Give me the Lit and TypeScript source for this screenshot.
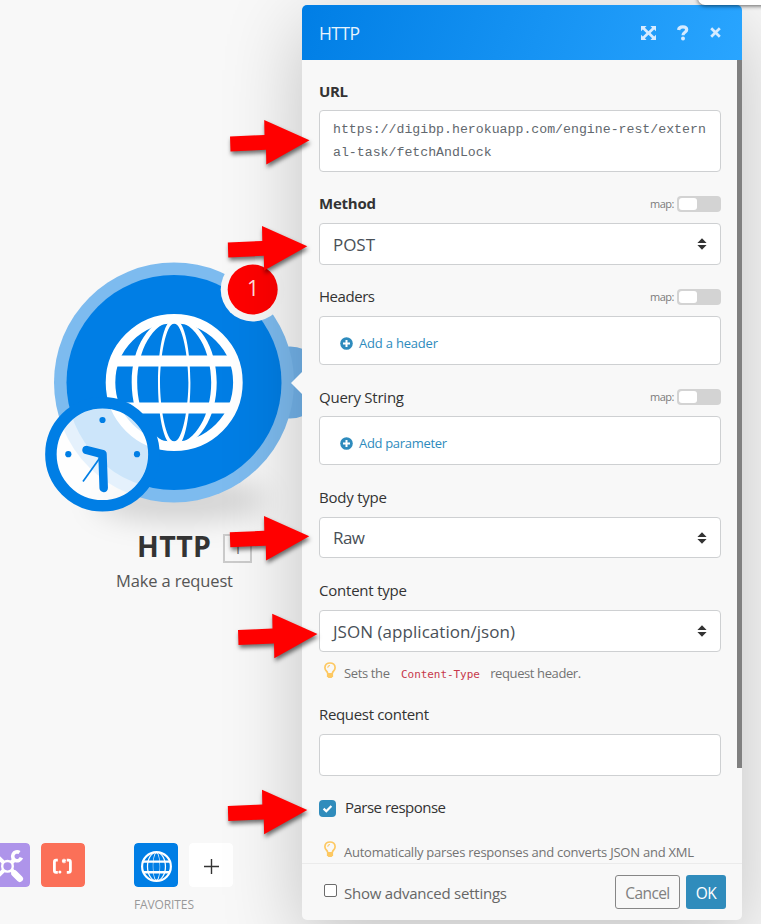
import { LitElement, html, svg, css, nothing } from "lit";
import { customElement, property } from "lit/decorators.js";

/** Inline text run whose tracking is tuned so that it spans `w` pixels. */
@customElement("fit-text")
class FitText extends LitElement {
  @property({ type: Number }) w = 0;
  static styles = css`
    :host { display: inline-block; white-space: nowrap; }
  `;
  firstUpdated() {
    const n = (this.textContent ?? "").trim().length;
    if (!this.w || n < 2) return;
    const natural = this.getBoundingClientRect().width;
    this.style.letterSpacing = `${(this.w - natural) / (n - 1)}px`;
  }
  render() {
    return html`<slot></slot>`;
  }
}

@customElement("map-toggle")
class MapToggle extends LitElement {
  static styles = css`
    :host { display: flex; align-items: center; gap: 3px; height: 16px; font-weight: 400; }
    .text { font-size: 11px; line-height: 16px; color: #7b7b7b; margin-top: -1px; }
    .track { box-sizing: border-box; width: 44px; height: 16px; padding: 2px; border-radius: 4px; background: #d3d3d3; }
    .knob { width: 18px; height: 12px; border-radius: 3px; background: #fff; }
  `;
  render() {
    return html`<span class="text"><fit-text w="24.5">map:</fit-text></span>
      <div class="track"><div class="knob"></div></div>`;
  }
}

@customElement("form-select")
class FormSelect extends LitElement {
  @property() value = "";
  @property({ type: Number }) w = 0;
  static styles = css`
    :host {
      box-sizing: border-box; display: flex; align-items: center; justify-content: space-between;
      padding: 0 13px; border: 1px solid #ced0d2; border-radius: 4px; background: #fff;
      font-size: 17px; line-height: 24px; color: #495057;
    }
    .value { padding-top: 1px; }
    svg { display: block; width: 10px; height: 12px; }
  `;
  render() {
    return html`<span class="value"><fit-text w=${this.w}>${this.value}</fit-text></span>
      <svg viewBox="0 0 10 12"><path d="M5 .3 9.600 5H.4zM5 11.700 .4 7h9.200z" fill="#333" /></svg>`;
  }
}

@customElement("hint-line")
class HintLine extends LitElement {
  static styles = css`
    :host { display: flex; gap: 8px; padding-left: 5px; font-size: 13px; line-height: 20px; color: #737373; }
    svg { flex: none; width: 12px; height: 17px; margin-top: -1px; }
  `;
  render() {
    return html`<svg viewBox="0 0 12 17">
        <path d="M3.600 11.200C3.500 9.400.9 8.600.9 5.700 .9 2.800 3.200 1 6 1s5.100 1.800 5.100 4.700c0 2.900-2.600 3.700-2.700 5.500" fill="none" stroke="#fdc861" stroke-width="1.700" />
        <path d="M3.800 5.700c0-1.300.9-2.200 2.200-2.200" fill="none" stroke="#fdc861" stroke-width="1.100" />
        <path d="M2.900 11h6.200v3.200L7.600 16H4.400l-1.500-1.800z" fill="#fdc861" />
      </svg><div><slot></slot></div>`;
  }
}

const globe = () => svg`
  <g fill="none" stroke="#fff">
    <circle cx="68.500" cy="68.500" r="63.700" stroke-width="9.600" />
    <path fill="#fff" fill-rule="evenodd" stroke="none" d="M68.500 4C44 4 26 33 26 68.500S44 133 68.500 133 111 104 111 68.500 93 4 68.500 4zM68.500 7.500C90 7.500 105.500 37 105.500 68.500S90 129.500 68.500 129.500 31.500 100 31.500 68.500 47 7.500 68.500 7.500z" />
    <path fill="#fff" fill-rule="evenodd" stroke="none" d="M68.500 4C57 6 52.300 40 52.300 68.500S57 131 68.500 133 84.700 97 84.700 68.500 80 6 68.500 4zM68.500 9.500C77 9.500 82.700 44 82.700 68.500S77 127.500 68.500 127.500 54.300 93 54.300 68.500 60 9.500 68.500 9.500z" />
    <path d="M8 47H129M8 94H129" stroke-width="11" />
  </g>`;

@customElement("module-node")
class ModuleNode extends LitElement {
  static styles = css`
    :host { display: block; width: 302px; }
    .art { display: block; width: 302px; height: 300px; overflow: visible; }
    .badge { font-size: 21px; fill: #fff; fill-opacity: .9; text-anchor: middle; }
    .soft { filter: blur(14px); }
    .heading { display: flex; gap: 12px; height: 29px; padding-left: 137px; margin-top: -18px; align-items: center; }
    .name { width: 74px; font-size: 28.500px; font-weight: 700; line-height: 29px; color: #333; }
    .count {
      box-sizing: border-box; width: 29px; height: 29px; border: 2px solid #cbcbcb;
      display: flex; align-items: center; justify-content: center; font-size: 16px; color: #777; margin-top: 3px;
    }
    .sub { padding: 8px 0 0 116px; font-size: 16.500px; line-height: 24px; color: #555; }
  `;
  render() {
    return html`
      <svg class="art" viewBox="0 250 302 300">
        <ellipse class="soft" cx="180" cy="500" rx="86" ry="22" fill="#000" fill-opacity=".15" />
        <circle cx="290" cy="382.500" r="36" fill="#73b3ea" />
        <circle cx="174" cy="382.500" r="120" fill="#7dbbef" />
        <circle cx="174" cy="382.500" r="107.500" fill="#007ee5" />
        <g transform="translate(105.700 314)">${globe()}</g>
        <circle cx="102.400" cy="454.300" r="46.500" fill="#fff" fill-opacity=".8" />
        <circle cx="102.400" cy="454.300" r="51.500" fill="none" stroke="#007ee5" stroke-width="11.500" />
        <g fill="#007ee5">
          <circle cx="102.500" cy="420" r="3.100" />
          <circle cx="68.300" cy="454.200" r="3.100" />
          <circle cx="137" cy="454.200" r="3.100" />
        </g>
        <path d="M86.500 450 102.500 454.200 103.700 488" fill="none" stroke="#007ee5" stroke-width="8.500" stroke-linecap="round" stroke-linejoin="round" />
        <path d="M100.500 457 83 481.500" stroke="#007ee5" stroke-width="1.700" />
        <circle cx="252.700" cy="289.500" r="32" fill="#f7f7f7" />
        <circle cx="252.700" cy="289.500" r="25" fill="#f00" />
        <text class="badge" x="253" y="296">1</text>
      </svg>
      <div class="heading">
        <span class="name"><fit-text w="74">HTTP</fit-text></span>
        <span class="count">1</span>
      </div>
      <div class="sub"><fit-text w="117">Make a request</fit-text></div>`;
  }
}

@customElement("app-root")
class AppRoot extends LitElement {
  static styles = css`
    :host {
      display: block; position: relative; width: 761px; height: 924px; overflow: hidden;
      background: #f8f8f8; font-family: "Open Sans", "Noto Sans", sans-serif;
    }
    .layout { display: flex; height: 924px; }
    .canvas { display: flex; flex-direction: column; width: 302px; flex: none; padding-top: 250px; box-sizing: border-box; }
    .tools { display: flex; margin: auto 0 0; height: 81px; }
    .tile { width: 44px; height: 44px; border-radius: 4px; flex: none; display: block; }
    .scripts { display: flex; gap: 11px; margin-left: -14px; }
    .favorites { margin-left: 49px; }
    .pair { display: flex; gap: 11px; }
    .caption { font-size: 12px; line-height: 18px; color: #999; margin-top: 9px; }

    .panel {
      position: relative; display: flex; flex-direction: column; width: 440px; height: 915px; margin-top: 5px;
      border-radius: 5px; background: #f8f8f8; box-shadow: 0 20px 80px rgba(0, 0, 0, .22);
    }
    .caret { position: absolute; left: -11px; top: 367px; width: 11px; height: 22px; background: #f8f8f8; clip-path: polygon(100% 0, 100% 100%, 0 50%); }
    .head {
      display: flex; align-items: center; height: 55px; flex: none; padding: 0 21px 0 17px; box-sizing: border-box;
      border-radius: 5px 5px 0 0; background: linear-gradient(110deg, #007ee5, #29a5ff); color: rgba(255, 255, 255, .92);
    }
    .title { flex: 1; font-size: 17.500px; line-height: 26px; padding-top: 1px; }
    .actions { display: flex; align-items: center; gap: 21px; }
    .actions svg { display: block; fill: #d5eaff; }
    .scroll { display: flex; height: 803px; overflow: hidden; }
    .bar { width: 5px; height: 708px; background: #808080; flex: none; }
    .body { flex: 1; padding: 21px 16px 0 17px; }
    .label { display: flex; justify-content: space-between; align-items: center; height: 20px; margin-bottom: 10px; font-size: 15px; line-height: 20px; color: #333; }
    .label map-toggle { margin-top: 2px; }
    .tight { margin-bottom: 9px; }
    .tight map-toggle { margin-top: 0; }
    .bold { font-weight: 700; }
    .box { box-sizing: border-box; border: 1px solid #ced0d2; border-radius: 4px; background: #fff; }
    .url { height: 62px; padding: 7px 13px; margin-bottom: 21px; font: 13.220px/23px "Liberation Mono", monospace; color: #62686e; word-break: break-all; }
    .adder { height: 49px; margin-bottom: 22px; padding: 5px 20px 0; display: flex; align-items: center; gap: 6px; font-size: 13px; color: #2e8bbd; }
    .adder svg { display: block; width: 13px; height: 13px; }
    .h42 { height: 42px; margin-bottom: 21px; }
    .h41 { height: 41px; margin-bottom: 22px; }
    .last { height: 42px; margin-bottom: 11px; }
    .hint1 { height: 41px; }
    .code { font: 11px "DejaVu Sans Mono", monospace; color: #c7384c; margin: 0 7px 0 8px; letter-spacing: -.06px; }
    .content { height: 42px; margin-bottom: 24px; }
    .check { display: flex; gap: 9px; height: 17px; align-items: center; font-size: 15px; line-height: 20px; color: #333; margin-bottom: 25px; }
    .check svg { display: block; width: 17px; height: 17px; }
    .check fit-text { margin-top: -4px; }
    .foot { display: flex; align-items: center; flex: 1; border-top: 1px solid #ebebeb; padding: 0 16px 0 22px; color: #666; font-size: 15px; }
    .empty { width: 11px; height: 11px; border: 1px solid #6b6b6b; border-radius: 2px; background: #fff; margin: 0 7px 3px 0; }
    .advanced { flex: 1; padding-top: 1px; }
    .btn { box-sizing: border-box; height: 34px; border-radius: 3px; display: flex; align-items: center; justify-content: center; font-size: 15.500px; margin-bottom: 1px; padding-top: 2px; }
    .cancel { width: 65px; border: 1px solid #868686; color: #808080; margin-right: 6px; }
    .ok { width: 40px; background: #308cbc; color: #fff; }

    .corner { position: absolute; left: 698px; top: -14px; width: 80px; height: 19px; border-radius: 0 0 0 7px; background: #fff; box-shadow: 0 1px 4px rgba(0, 0, 0, .6); }
    .arrows { position: absolute; inset: 0; width: 761px; height: 924px; }
    .arrow { fill: #f00; filter: drop-shadow(1px 3px 2px rgba(0, 0, 0, .55)); }
  `;

  private label(text: string, w: number, map = false, cls = "") {
    return html`<div class="label ${cls}"><fit-text w=${w}>${text}</fit-text>${map ? html`<map-toggle></map-toggle>` : nothing}</div>`;
  }

  private adder(text: string, w: number) {
    return html`<div class="box adder">
      <svg viewBox="0 0 13 13"><circle cx="6.500" cy="6.500" r="6.300" fill="#2e8bbd" /><path d="M6.500 3v7M3 6.500h7" stroke="#fff" stroke-width="2" /></svg>
      <fit-text w=${w}>${text}</fit-text>
    </div>`;
  }

  render() {
    const tips = [[309.5, 140.3], [307.3, 246.3], [309.3, 536.2], [317.5, 634], [307.3, 810]];
    return html`
      <div class="layout">
        <div class="canvas">
          <module-node></module-node>
          <div class="tools">
            <div class="scripts">
              <svg class="tile" viewBox="0 0 44 44">
                <rect width="44" height="44" rx="4" fill="#ae94ea" />
                <g fill="none" stroke="#fff">
                  <circle cx="21.500" cy="23.300" r="5.300" stroke-width="2.400" />
                  <path d="M25.500 19.500 29 16" stroke-width="4.500" />
                  <path d="M33.500 9.600A4.400 4.400 0 1 0 35.300 14.600" stroke-width="3.600" />
                  <path d="M25.500 27 28 29.500" stroke-width="4" />
                  <path d="M28.500 30.500 33.800 35.800" stroke-width="6.500" stroke-linecap="round" />
                  <path d="M17.500 27.500 10 35" stroke-width="4" />
                  <path d="M17.500 19.500 9 11" stroke-width="4" />
                </g>
              </svg>
              <svg class="tile" viewBox="0 0 44 44">
                <rect width="44" height="44" rx="4" fill="#fb7058" />
                <path d="M16.800 17.200H15Q13.400 17.200 13.400 19V27.500Q13.400 29.300 15 29.300H16.800M25.800 17.200H27.600Q29.400 17.200 29.400 19V27.500Q29.400 29.300 27.600 29.300H25.800" fill="none" stroke="#fff" stroke-width="2.800" />
                <circle cx="18.900" cy="29" r="1.500" fill="#fff" />
                <path d="M23 15.800v4.400M21.100 16.900l3.800 2.200M24.900 16.900l-3.800 2.200" stroke="#fff" stroke-width="1.300" />
              </svg>
            </div>
            <div class="favorites">
              <div class="pair">
                <svg class="tile" viewBox="0 0 44 44">
                  <rect width="44" height="44" rx="4" fill="#007ee5" />
                  <g transform="translate(7 8) scale(.226)">${globe()}</g>
                </svg>
                <svg class="tile" viewBox="0 0 44 44">
                  <rect width="44" height="44" rx="4" fill="#fff" />
                  <path d="M22.500 16v15M15 23.500h15" stroke="#333" stroke-width="1.400" />
                </svg>
              </div>
              <div class="caption"><fit-text w="60">FAVORITES</fit-text></div>
            </div>
          </div>
        </div>

        <div class="panel">
          <div class="caret"></div>
          <div class="head">
            <div class="title"><fit-text w="41">HTTP</fit-text></div>
            <div class="actions">
              <svg width="15" height="14" viewBox="0 0 15 14">
                <path d="M0 0h5.600L3.900 1.700 7.500 5.200 11.100 1.700 9.400 0H15v5.300L13.200 3.600 9.600 7l3.600 3.400L15 8.700V14H9.400l1.700-1.700L7.500 8.800l-3.600 3.500L5.600 14H0V8.700l1.800 1.700L5.400 7 1.800 3.600 0 5.300z" />
              </svg>
              <svg width="12" height="16" viewBox="0 0 12 16">
                <path d="M1.600 5C1.800 3 3.600 1.900 5.800 1.900c2.500 0 3.900 1.100 3.900 2.900 0 2.600-3.700 2.400-3.700 5.400" fill="none" stroke="#d5eaff" stroke-width="3.200" />
                <circle cx="6" cy="13.600" r="2" />
              </svg>
              <svg width="11" height="11" viewBox="0 0 11 11">
                <path d="M1.200 1.200 9.800 9.800M9.800 1.200 1.200 9.800" stroke="#d5eaff" stroke-width="2.700" />
              </svg>
            </div>
          </div>
          <div class="scroll">
            <div class="body">
              ${this.label("URL", 29, false, "bold tight")}
              <div class="box url">https://digibp.herokuapp.com/engine-rest/external-task/fetchAndLock</div>
              ${this.label("Method", 57, true, "bold")}
              <form-select class="h42" value="POST" w="42"></form-select>
              ${this.label("Headers", 56, true)}
              ${this.adder("Add a header", 79)}
              ${this.label("Query String", 85, true, "tight")}
              ${this.adder("Add parameter", 88)}
              ${this.label("Body type", 68)}
              <form-select class="h41" value="Raw" w="32"></form-select>
              ${this.label("Content type", 88)}
              <form-select class="last" value="JSON (application/json)" w="182"></form-select>
              <hint-line class="hint1"><fit-text w="46">Sets the</fit-text><span> </span><span class="code">Content-Type</span><span> </span><fit-text w="91">request header.</fit-text></hint-line>
              ${this.label("Request content", 110)}
              <div class="box content"></div>
              <div class="check">
                <svg viewBox="0 0 17 17"><rect width="17" height="17" rx="4" fill="#308cbc" /><path d="M4.600 8.600 7.300 11.200 12.400 6" fill="none" stroke="#fff" stroke-width="2.200" /></svg>
                <fit-text w="101">Parse response</fit-text>
              </div>
              <hint-line><fit-text w="350">Automatically parses responses and converts JSON and XML</fit-text></hint-line>
            </div>
            <div class="bar"></div>
          </div>
          <div class="foot">
            <div class="empty"></div>
            <div class="advanced"><fit-text w="163">Show advanced settings</fit-text></div>
            <div class="btn cancel"><fit-text w="45">Cancel</fit-text></div>
            <div class="btn ok"><fit-text w="21">OK</fit-text></div>
          </div>
        </div>
      </div>
      <div class="corner"></div>
      <svg class="arrows" viewBox="0 0 761 924">
        ${tips.map(([x, y]) => svg`<polygon class="arrow" transform="translate(${x - 79.5} ${y - 20.2})" points="0,16.300 34.500,14.800 34.200,0 79.500,20.200 36.300,44.500 36,29.700 .5,31.300" />`)}
      </svg>`;
  }
}
